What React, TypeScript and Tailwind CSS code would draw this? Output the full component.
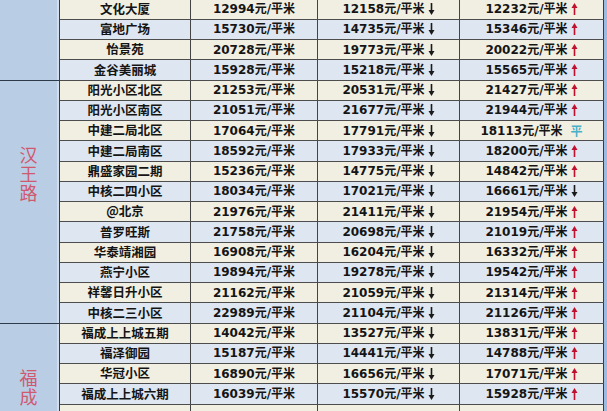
import React from "react";

type Trend = "up" | "down" | "flat";
type Row = { name: string; a: string; b: string; c: string; t: Trend };

const groups: { label: string; pt: string; rows: Row[] }[] = [
  {
    label: "",
    pt: "pt-0",
    rows: [
      { name: "文化大厦", a: "12994", b: "12158", c: "12232", t: "up" },
      { name: "富地广场", a: "15730", b: "14735", c: "15346", t: "up" },
      { name: "怡景苑", a: "20728", b: "19773", c: "20022", t: "up" },
      { name: "金谷美丽城", a: "15928", b: "15218", c: "15565", t: "up" },
    ],
  },
  {
    label: "汉王路",
    pt: "pt-[65px]",
    rows: [
      { name: "阳光小区北区", a: "21253", b: "20531", c: "21427", t: "up" },
      { name: "阳光小区南区", a: "21051", b: "21677", c: "21944", t: "up" },
      { name: "中建二局北区", a: "17064", b: "17791", c: "18113", t: "flat" },
      { name: "中建二局南区", a: "18592", b: "17933", c: "18200", t: "up" },
      { name: "鼎盛家园二期", a: "15236", b: "14775", c: "14842", t: "up" },
      { name: "中核二四小区", a: "18034", b: "17021", c: "16661", t: "down" },
      { name: "@北京", a: "21976", b: "21411", c: "21954", t: "up" },
      { name: "普罗旺斯", a: "21758", b: "20698", c: "21019", t: "up" },
      { name: "华泰靖湘园", a: "16908", b: "16204", c: "16332", t: "up" },
      { name: "燕宁小区", a: "19894", b: "19278", c: "19542", t: "up" },
      { name: "祥馨日升小区", a: "21162", b: "21059", c: "21314", t: "up" },
      { name: "中核二三小区", a: "22989", b: "21104", c: "21126", t: "up" },
    ],
  },
  {
    label: "福成",
    pt: "pt-[45px]",
    rows: [
      { name: "福成上上城五期", a: "14042", b: "13527", c: "13831", t: "up" },
      { name: "福泽御园", a: "15187", b: "14441", c: "14788", t: "up" },
      { name: "华冠小区", a: "16890", b: "16656", c: "17071", t: "up" },
      { name: "福成上上城六期", a: "16039", b: "15570", c: "15928", t: "up" },
      { name: "", a: "", b: "", c: "", t: "up" },
      { name: "", a: "", b: "", c: "", t: "up" },
    ],
  },
];

function Arrow({ up }: { up: boolean }) {
  return (
    <svg width="7" height="12" viewBox="0 0 7 12" className="ml-[3px] shrink-0">
      {up ? (
        <g fill="#c0102e" stroke="#c0102e">
          <line x1="3.5" y1="4" x2="3.5" y2="12" strokeWidth="1.6" />
          <polygon points="3.5,0 6.5,5 0.5,5" stroke="none" />
        </g>
      ) : (
        <g fill="#1a1a1a" stroke="#1a1a1a">
          <line x1="3.5" y1="0" x2="3.5" y2="8" strokeWidth="1.6" />
          <polygon points="3.5,12 6.5,7 0.5,7" stroke="none" />
        </g>
      )}
    </svg>
  );
}

function Price({ v }: { v: string }) {
  if (!v) return null;
  return (
    <span className="font-['DejaVu_Sans','Noto_Sans_CJK_SC',sans-serif] text-[12px] font-bold text-[#151515]">
      {v}元/平米
    </span>
  );
}

let rowIndex = 0;

export default function App() {
  rowIndex = 0;
  return (
    <div className="flex h-[411px] w-[607px] overflow-hidden bg-[#f0eee1]">
      <div className="-mt-[0.5px] flex w-[604px] shrink-0 flex-col">
        {groups.map((g, gi) => (
          <div key={gi} className="flex">
            <div className="flex w-[60px] shrink-0 border-r border-b border-r-[#3a3a3a] border-b-[#2e3a4a] bg-[#b9cde5]">
              <div className={`flex w-[57px] flex-col items-center ${g.pt}`}>
                {g.label && (
                  <div className="font-['Noto_Sans_CJK_SC',sans-serif] text-[18px] leading-[20px] tracking-[1px] text-[#cf5a70] [writing-mode:vertical-rl]">
                    {g.label}
                  </div>
                )}
              </div>
              <div className="w-[2px] bg-[#d3deec]" />
            </div>
            <div className="flex flex-col">
              {g.rows.map((r, ri) => {
                const i = rowIndex++;
                const bg = i % 2 === 0 ? "bg-[#f1efe2]" : "bg-[#dde6f1]";
                return (
                  <div
                    key={ri}
                    className={`grid h-[20.25px] grid-cols-[131px_127px_142px_144px] border-b border-[#4d4d4d] ${bg}`}
                  >
                    <div className="flex items-center justify-center border-r border-[#444] font-['Noto_Sans_CJK_SC',sans-serif] text-[12.5px] font-bold text-[#141414]">
                      {r.name}
                    </div>
                    <div className="flex items-center justify-center border-r border-[#444]">
                      <Price v={r.a} />
                    </div>
                    <div className="flex items-center justify-center border-r border-[#444]">
                      {r.b && (
                        <>
                          <Price v={r.b} />
                          <Arrow up={false} />
                        </>
                      )}
                    </div>
                    <div className="flex items-center justify-center border-r border-[#3a3a3a]">
                      {r.c && (
                        <>
                          <Price v={r.c} />
                          {r.t === "flat" ? (
                            <span className="ml-[8px] font-['Noto_Sans_CJK_SC',sans-serif] text-[12px] font-bold text-[#4bb0c8]">
                              平
                            </span>
                          ) : (
                            <Arrow up={r.t === "up"} />
                          )}
                        </>
                      )}
                    </div>
                  </div>
                );
              })}
            </div>
          </div>
        ))}
      </div>
      <div className="w-[3px] shrink-0 bg-[#9dbbe0]" />
    </div>
  );
}
